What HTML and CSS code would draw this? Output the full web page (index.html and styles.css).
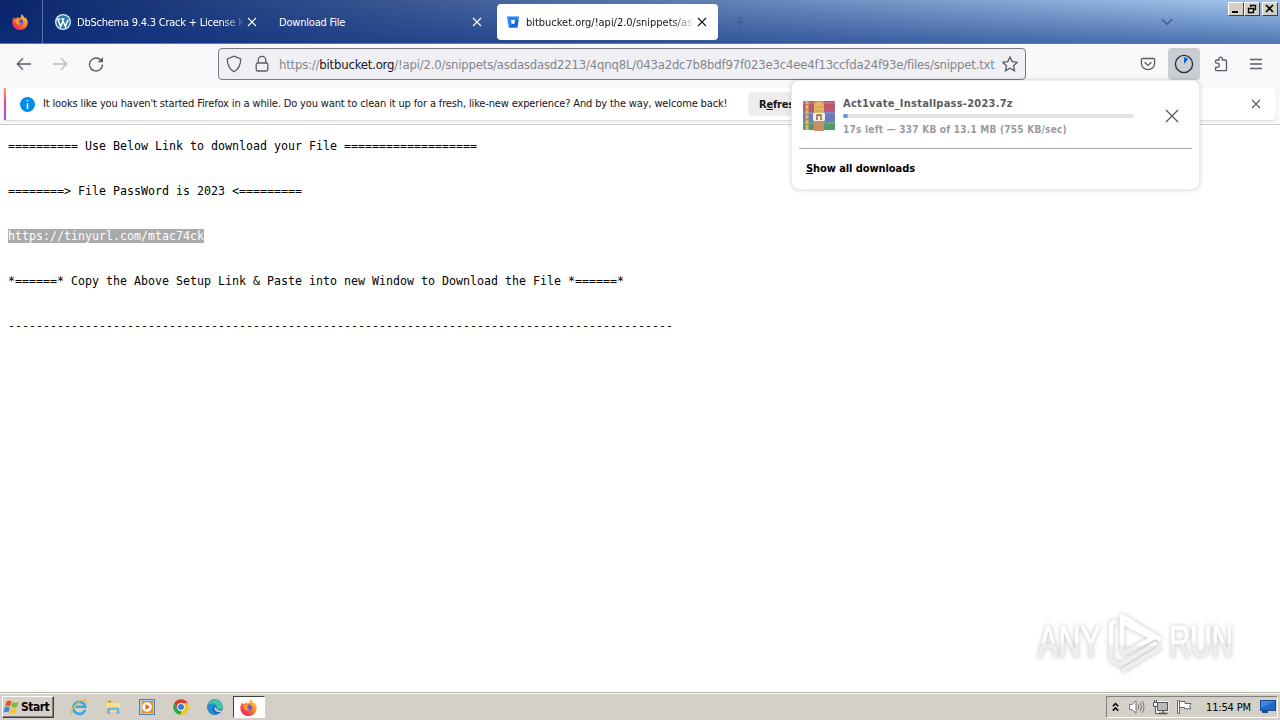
FILE: index.html
```html
<!DOCTYPE html>
<html lang="en">
  <head>
    <meta charset="utf-8">
    <title>bitbucket.org/!api/2.0/snippets</title>
    <link rel="stylesheet" href="styles.css">
  </head>
  <body>
    <div class="tabbar">
      <div class="firefox-view">
        <svg width="16" height="16" viewBox="0 0 16 16">
          <defs>
            <linearGradient id="fox" x1="1" y1="0" x2="0.2" y2="1">
              <stop offset="0" stop-color="#ffe14a" />
              <stop offset="0.45" stop-color="#ff9029" />
              <stop offset="0.8" stop-color="#f83c45" />
              <stop offset="1" stop-color="#e5207a" />
            </linearGradient>
            <symbol id="firefox" viewBox="0 0 16 16">
              <path d="M2.3 3.2 3.2 4.7 5 4.2 5.6 2.7 7 4.2 9 3.2 9.4.3C11 1.2 12 2.6 12.4 4L13.6 3.5C15 5 15.8 7 15.7 8.8A7.7 7.3 0 0 1 .3 8.8C.2 6.5 1 4.5 2.3 3.2z" fill="url(#fox)" />
              <circle cx="8.2" cy="8.2" r="3.1" fill="#7950c9" />
              <path d="M3.5 5.5C5.5 4.8 7.5 5 8.5 6.2L6.7 7.3C6.5 8.8 7.8 9.7 9.4 9.3 8 11.8 4 11 3.5 8z" fill="#ff9b28" />
            </symbol>
          </defs>
          <use href="#firefox" />
        </svg>
      </div>
      <div class="tab tab-first">
        <svg class="favicon" width="16" height="16" viewBox="0 0 16 16">
          <circle cx="8" cy="8" r="8" fill="#d8edf6" />
          <circle cx="8" cy="8" r="6.7" fill="#297a9e" />
          <path d="M2.8 5.3 5.7 12.7 8 6.5 10.4 12.7 13 5.8M2.3 4.9H5.2M6.2 4.9H9.4M7.4 4.9 8 6.5" fill="none" stroke="#fff" stroke-width="1.5" />
        </svg>
        <span class="tab-label">DbSchema 9.4.3 Crack + License K</span>
        <svg class="close" width="10" height="10" viewBox="0 0 10 10"><path d="M1 1 9 9M9 1 1 9" /></svg>
      </div>
      <div class="tab tab-second">
        <span class="tab-label">Download File</span>
        <svg class="close" width="10" height="10" viewBox="0 0 10 10"><path d="M1 1 9 9M9 1 1 9" /></svg>
      </div>
      <div class="tab tab-active">
        <svg class="favicon" width="12" height="12" viewBox="0 0 12 12">
          <path d="M0 .5H12L10.4 11.5H1.8z" fill="#2684ff" />
          <path d="M8 4H11.5L10.4 11.5H1.8L5 8H7.5z" fill="#1764df" />
          <path d="M4 4H8L7.4 7.8H4.7z" fill="#fff" />
        </svg>
        <span class="tab-label">bitbucket.org/!api/2.0/snippets/asd</span>
        <svg class="close" width="10" height="10" viewBox="0 0 10 10"><path d="M1 1 9 9M9 1 1 9" /></svg>
      </div>
      <svg class="new-tab" width="12" height="12" viewBox="0 0 12 12"><path d="M6 1V11M1 6H11" /></svg>
      <svg class="all-tabs" width="12" height="8" viewBox="0 0 12 8"><path d="M.8 1 6 6.2 11.2 1" /></svg>
      <div class="window-buttons">
        <span class="wbtn"><svg width="14" height="12" viewBox="0 0 14 12"><path d="M3 9H9" stroke="#000" stroke-width="2" /></svg></span>
        <span class="wbtn"><svg width="14" height="12" viewBox="0 0 14 12"><path d="M5.5 4V2.5H10.5V6.5H8.5M5 2.5H11M3 5.5H9M3.5 5V9.5H8.5V5" fill="none" stroke="#000" stroke-width="1.3" /></svg></span>
        <span class="wbtn wbtn-close"><svg width="14" height="12" viewBox="0 0 14 12"><path d="M3 2 10 9M10 2 3 9" stroke="#000" stroke-width="1.6" /></svg></span>
      </div>
    </div>

    <div class="toolbar">
      <svg class="nav back" width="16" height="16" viewBox="0 0 16 16"><path d="M15 8H1.5M7 2.3 1.3 8 7 13.7" /></svg>
      <svg class="nav forward" width="16" height="16" viewBox="0 0 16 16"><path d="M1 8H14.5M9 2.3 14.7 8 9 13.7" /></svg>
      <svg class="nav reload" width="16" height="16" viewBox="0 0 16 16"><path d="M13.6 5.2A6.5 6.5 0 1 0 14.5 8.5" /><path d="M15 1V6.3H9.7z" class="solid" /></svg>
      <div class="urlbar">
        <svg width="16" height="18" viewBox="0 0 16 18"><path d="M8 1.2 14.7 4C14.7 9.5 13.2 14 8 16.8 2.8 14 1.3 9.5 1.3 4z" /></svg>
        <svg class="lock" width="14" height="18" viewBox="0 0 14 18"><path d="M3.2 8V5.2A3.8 3.8 0 0 1 10.8 5.2V8" /><rect x="1.2" y="8" width="11.6" height="8" rx="1.5" /></svg>
        <span class="url">https://<b>bitbucket.org</b>/!api/2.0/snippets/asdasdasd2213/4qnq8L/043a2dc7b8bdf97f023e3c4ee4f13ccfda24f93e/files/snippet.txt</span>
        <svg class="star" width="16" height="16" viewBox="0 0 16 16"><path d="M8 1 10.2 5.6 15.3 6.2 11.5 9.7 12.5 14.8 8 12.3 3.5 14.8 4.5 9.7.7 6.2 5.8 5.6z" /></svg>
      </div>
      <div class="tools">
        <svg width="16" height="16" viewBox="0 0 16 16"><path d="M2.6 2.5H13.4Q14.6 2.5 14.6 3.7V7.5A6.6 6.1 0 0 1 1.4 7.5V3.7Q1.4 2.5 2.6 2.5z" /><path d="M4.6 6.3 8 9.4 11.4 6.3" /></svg>
        <span class="downloads-button">
          <svg width="20" height="20" viewBox="0 0 20 20"><circle cx="10" cy="10" r="8.6" /><path d="M10 10V3.2A6.8 6.8 0 0 1 14.2 4.7z" class="pie" /></svg>
        </span>
        <svg class="ext" width="16" height="16" viewBox="0 0 16 16"><path d="M2.6 7V4.9Q2.6 4 3.5 4H6V2.8A1.7 1.7 0 0 1 9.4 2.8V4H12.6Q13.5 4 13.5 4.9V13.7Q13.5 14.6 12.6 14.6H3.5Q2.6 14.6 2.6 13.7V11.3H4.2A2 2 0 0 0 4.2 7.2H2.6" /></svg>
        <svg width="14" height="14" viewBox="0 0 14 14"><path d="M1 2.5H13M1 7H13M1 11.5H13" /></svg>
      </div>
    </div>

    <div class="notice-wrap">
      <div class="notice">
        <svg class="info" width="15" height="15" viewBox="0 0 15 15"><circle cx="7.5" cy="7.5" r="7.5" fill="#008deb" /><path d="M7.5 3V4.6M7.5 6.2V12" stroke="#fff" stroke-width="1.5" /></svg>
        <span class="notice-text">It looks like you haven't started Firefox in a while. Do you want to clean it up for a fresh, like-new experience? And by the way, welcome back!</span>
        <button class="refresh">R<u>e</u>fresh</button>
        <svg class="close" width="10" height="10" viewBox="0 0 10 10"><path d="M1 1 9 9M9 1 1 9" /></svg>
      </div>
    </div>

    <div class="content">
<pre>========== Use Below Link to download your File ===================


========&gt; File PassWord is 2023 &lt;=========


<span class="selected">https://tinyurl.com/mtac74ck</span>


*======* Copy the Above Setup Link &amp; Paste into new Window to Download the File *======*


-----------------------------------------------------------------------------------------------</pre>
    </div>

    <div class="taskbar">
      <div class="start">
        <svg width="17" height="16" viewBox="0 0 17 16">
          <path d="M3.5 2.5Q6 .8 8.7 2.4L7.2 7.3Q4.6 6 2 7.5z" fill="#e8562a" />
          <path d="M9.6 3Q12 4.5 15.5 3L14 8Q11.3 9.3 8.2 7.8z" fill="#7db93b" />
          <path d="M1.7 8.5Q4.3 7 6.9 8.4L5.5 13.2Q2.8 12 .3 13.5z" fill="#3e88d8" />
          <path d="M7.9 8.9Q10.5 10.4 13.7 9L12.2 14Q9.5 15.2 6.5 13.8z" fill="#fbc22f" />
        </svg>
        Start
      </div>
      <div class="launch">
        <svg width="18" height="18" viewBox="0 0 18 18">
          <path d="M15 11.8A6 6 0 1 1 15.2 8.8H5.5" fill="none" stroke="#3ba7e0" stroke-width="2.6" />
          <path d="M2.5 15.8C-.5 17 1.5 10 7 5.4 11.5 1.5 17.5.2 15.8 4.2" fill="none" stroke="#e9b93a" stroke-width="1.3" />
        </svg>
        <svg width="18" height="18" viewBox="0 0 18 18">
          <path d="M2 3H7L8 4.5H15V9H2z" fill="#e9c55d" />
          <path d="M2.5 5H16V14H2.5z" fill="#f6df92" />
          <path d="M3 16V11Q3 9.5 4.5 9.5H14Q15.5 9.5 15.5 11V16H12.5V12H6V16z" fill="#70b8dc" />
          <path d="M4.5 3.5H7" stroke="#54a545" stroke-width="1.5" />
        </svg>
        <svg width="18" height="18" viewBox="0 0 18 18">
          <rect x="1.5" y="1.5" width="15" height="15" fill="#a9cdec" stroke="#4682b9" />
          <rect x="4" y="3" width="11" height="12" fill="#f28a1c" />
          <circle cx="9" cy="9" r="4.8" fill="#fff" />
          <path d="M7.5 6 12 9 7.5 12z" fill="#e56a0b" />
        </svg>
        <svg width="18" height="18" viewBox="0 0 18 18">
          <circle cx="9" cy="9" r="7.8" fill="#f9c21a" />
          <path d="M2.2 5.2A7.8 7.8 0 0 1 15.8 5.2H9L5.7 11z" fill="#dd3c2c" />
          <path d="M2.2 5.2 5.7 11 9.5 12.5 8.5 16.8A7.8 7.8 0 0 1 2.2 5.2z" fill="#2da34e" />
          <circle cx="9" cy="9" r="3.9" fill="#fff" />
          <circle cx="9" cy="9" r="3" fill="#3b78e7" />
        </svg>
        <svg width="18" height="18" viewBox="0 0 18 18">
          <circle cx="9" cy="9" r="7.8" fill="#1672c4" />
          <path d="M1.4 8A7.8 7.8 0 0 1 16.8 8.8C16.5 12.2 11 12.3 10.7 10.2 12 8 9 5.3 5.8 5.8 3.8 6 2.2 6.7 1.4 8z" fill="#43c7a2" />
          <path d="M1.4 8C3 5 8.5 4.5 10.7 8.5 8 6.7 6 9 6.5 12 7 14.3 9 16 11 16.3 5 18.5.8 13.5 1.4 8z" fill="#1e8ed0" />
          <path d="M10.5 8.8C9 11 12 13 16 12.4L15.2 13.8C11 15 8 12 8.5 10z" fill="#d4d0c8" />
        </svg>
      </div>
      <div class="task-active"><svg width="17" height="17"><use href="#firefox" /></svg></div>
      <div class="tray">
        <svg class="chev" width="7" height="10" viewBox="0 0 7 10"><path d="M.8 4.2 3.5 1.5 6.2 4.2M.8 8.6 3.5 5.9 6.2 8.6" fill="none" stroke="#000" stroke-width="1.5" /></svg>
        <svg class="speaker" width="18" height="16" viewBox="0 0 18 16"><path d="M1.5 5.5H4L8 1.8V14.2L4 10.5H1.5z" fill="#fff" stroke="#777" /><path d="M10 5.5Q11.5 8 10 10.5M12 3.8Q15 8 12 12.2M14 2Q18 8 14 14" fill="none" stroke="#777" /></svg>
        <svg class="net" width="17" height="16" viewBox="0 0 17 16"><rect x="5" y="3" width="10.5" height="8.5" fill="#ccc" stroke="#fff" stroke-width="2" /><rect x="5.5" y="3.5" width="10" height="8" fill="#bbb" stroke="#555" /><path d="M7 14.5H15.5M11 12V14" stroke="#555" stroke-width="1.5" /><path d="M1.5 3.5H5.5V7.5H1.5zM2.5 1V3M4.5 1V3M3.5 8V14.5H7" fill="#fff" stroke="#555" /></svg>
        <svg class="flag" width="17" height="16" viewBox="0 0 17 16"><path d="M1.5 1.5H3.5V14.5H1.5z" fill="#fff" stroke="#666" /><path d="M3.5 2.5H9V4.5H15L13.5 7.2 15 9.8H8.5V8.5H3.5z" fill="#fff" stroke="#666" /></svg>
        <span class="clock">11:54 PM</span>
        <svg class="desktop" width="16" height="13" viewBox="0 0 16 13"><rect x=".5" y=".5" width="15" height="10" fill="#1f69c9" stroke="#174a91" /><path d="M1 1H15L1 8z" fill="#3e86d8" /><path d="M2 12H8" stroke="#254f87" stroke-width="2" /></svg>
      </div>
    </div>

    <div class="download-panel">
      <div class="download-item">
        <svg class="archive" width="32" height="32" viewBox="0 0 32 32">
          <rect x="0" y="1" width="32" height="10" rx="1" fill="#b8586c" />
          <rect x="0" y="11" width="32" height="10" fill="#6b7bbd" />
          <rect x="0" y="21" width="32" height="9" rx="1" fill="#55996f" />
          <path d="M0 3H32M0 13H32M0 23H32" stroke="#fff" stroke-opacity=".25" />
          <path d="M4 1V30" stroke="#e2b45c" stroke-width="3" />
          <path d="M4 4V28" stroke="#a08a4c" stroke-width="3" stroke-dasharray="1 4" />
          <rect x="11" y="1" width="10" height="30" fill="#c88e68" />
          <path d="M11 13V7Q11 2 16 2T21 7V13z" fill="#e8b963" />
          <path d="M12 7H20M12 11H20" stroke="#c49350" />
          <rect x="10" y="13" width="12" height="8" rx="1" fill="#f4ece4" />
          <path d="M14 20V15H18V20" fill="none" stroke="#85604b" stroke-width="1.4" />
        </svg>
        <div class="download-info">
          <div class="download-name">Act1vate_Installpass-2023.7z</div>
          <div class="progress"><div class="progress-bar"></div></div>
          <div class="download-status">17s left — 337 KB of 13.1 MB (755 KB/sec)</div>
        </div>
        <svg class="cancel" width="14" height="14" viewBox="0 0 14 14"><path d="M1 1 13 13M13 1 1 13" /></svg>
      </div>
      <div class="show-all"><u>S</u>how all downloads</div>
    </div>

    <svg class="watermark" width="210" height="70" viewBox="0 0 210 70">
      <defs>
        <linearGradient id="wm" x1="0" y1="0" x2="0" y2="1">
          <stop offset="0.5" stop-color="#fff" />
          <stop offset="0.56" stop-color="#eee" />
        </linearGradient>
      </defs>
      <g class="wm-shape">
        <text x="8" y="52" textLength="63" lengthAdjust="spacingAndGlyphs">ANY</text>
        <text x="139" y="52" textLength="64" lengthAdjust="spacingAndGlyphs">RUN</text>
        <path d="M81 55V19L86 16M92 49V11L131 35M81 55 90 60 127 38M92 49 123 33 92 17M92 66 131 42" />
      </g>
    </svg>
  </body>
</html>
```

FILE: styles.css
```css
* {
  box-sizing: border-box;
}
body {
  margin: 0;
  width: 1280px;
  height: 720px;
  overflow: hidden;
  display: flex;
  flex-direction: column;
  background: #fff;
  font-family: "DejaVu Sans Condensed", "DejaVu Sans", sans-serif;
  font-stretch: condensed;
  font-size: 11px;
  color: #15141a;
}
svg {
  flex: none;
  display: block;
}

/* tabs */
.tabbar {
  height: 44px;
  flex: none;
  display: flex;
  align-items: center;
  background: linear-gradient(rgba(10, 50, 130, 0) 0, rgba(10, 50, 130, 0.55) 100%),
    linear-gradient(90deg, #0a246a, #a6caf0);
  border-bottom: 1px solid #6b7792;
}
.firefox-view {
  width: 43px;
  height: 43px;
  padding: 14px 0 0 12px;
  border-right: 1px solid #5d72a3;
}
.tab {
  height: 36px;
  display: flex;
  align-items: center;
  color: #fff;
}
.tab-first {
  width: 225px;
  padding-left: 12px;
}
.tab-second {
  width: 225px;
  padding-left: 11px;
}
.tab-active {
  width: 221px;
  margin-left: 4px;
  padding-left: 10px;
  background: #fff;
  color: #15141a;
  border-radius: 4px;
}
.favicon {
  margin-right: 6px;
}
.tab-active .favicon {
  margin-right: 7px;
}
.tab-label {
  overflow: hidden;
  white-space: nowrap;
  width: 166px;
  line-height: 18px;
  padding-top: 2px;
}
.tab-first .tab-label {
  letter-spacing: -0.23px;
  -webkit-mask-image: linear-gradient(90deg, #000 145px, transparent 170px);
}
.tab-second .tab-label {
  width: 189px;
  letter-spacing: -0.2px;
}
.tab-active .tab-label {
  letter-spacing: -0.02px;
  -webkit-mask-image: linear-gradient(90deg, #000 145px, transparent 170px);
}
.tab .close {
  margin-left: 4px;
}
.tab-active .close {
  margin-left: 5px;
}
.close path {
  stroke: currentColor;
  stroke-width: 1.1;
}
.new-tab {
  margin-left: 16px;
}
.new-tab path,
.all-tabs path {
  fill: none;
  stroke: #405f91;
  stroke-width: 1.4;
}
.all-tabs {
  margin-left: auto;
}
.window-buttons {
  display: flex;
  align-self: flex-start;
  margin: 2px 2px 0 55px;
}
.wbtn {
  width: 16px;
  height: 14px;
  background: #d4d0c8;
  border: 1px solid;
  border-color: #fff #404040 #404040 #fff;
}
.wbtn-close {
  margin-left: 2px;
}

/* navigation */
.toolbar {
  height: 40px;
  flex: none;
  display: flex;
  align-items: center;
  background: #f9f9fb;
}
.toolbar path,
.toolbar rect,
.toolbar circle {
  fill: none;
  stroke: #5b5b66;
  stroke-width: 1.3;
}
.nav {
  margin-left: 20px;
}
.back {
  margin-left: 16px;
}
.forward {
  opacity: 0.4;
}
.toolbar .solid {
  fill: #5b5b66;
  stroke: none;
}
.urlbar {
  width: 808px;
  height: 32px;
  margin-left: 114px;
  padding-left: 7px;
  display: flex;
  align-items: center;
  background: #f0f0f4;
  border: 1px solid #77777f;
  border-radius: 4px;
}
.lock {
  margin-left: 13px;
}
.url {
  width: 718px;
  margin-left: 10px;
  color: #85858b;
  font-size: 13px;
  letter-spacing: -0.2px;
  white-space: nowrap;
}
.url b {
  font-weight: normal;
  color: #15141a;
}
.star {
  margin-left: 5px;
}
.tools {
  display: flex;
  align-items: center;
  margin-left: 114px;
}
.downloads-button {
  width: 32px;
  height: 32px;
  margin: 0 13px 0 12px;
  padding: 6px;
  background: #cbcdd5;
  border-radius: 4px;
}
.downloads-button circle {
  stroke: #2b2a33;
}
.toolbar .pie {
  fill: #0560d6;
  stroke: none;
}
.ext {
  margin-right: 20px;
}

/* notification bar */
.notice-wrap {
  height: 41px;
  flex: none;
  padding: 4px 4px 0;
  background: #f9f9fb;
  border-bottom: 1px solid #ccc;
}
.notice {
  height: 32px;
  display: flex;
  align-items: center;
  padding-left: 14px;
  background: #fff linear-gradient(#ff9a5b, #f0419b 45%, #9059ff) 0 0 / 2px 100% no-repeat;
  border-radius: 0 4px 4px 0;
  box-shadow: 0 1px 2px rgba(58, 57, 68, 0.2);
}
.info {
  margin: 0 8px 0 2px;
}
.notice-text {
  width: 705px;
  padding-bottom: 1px;
  letter-spacing: -0.143px;
  white-space: nowrap;
}
.refresh {
  width: 120px;
  height: 24px;
  border: 0;
  border-radius: 4px;
  background: #ececef;
  color: #15141a;
  font: bold 11px "DejaVu Sans Condensed", sans-serif;
  letter-spacing: -0.2px;
  text-align: left;
  padding: 0 11px;
  white-space: nowrap;
}
.notice .close {
  margin-left: auto;
  margin-right: 15px;
  color: #5b5b66;
}

/* page */
.content {
  flex: 1;
  padding: 14px 8px;
}
pre {
  margin: 0;
  font-family: "DejaVu Sans Mono", monospace;
  font-size: 11.627px;
  letter-spacing: 0.01px;
  line-height: 15px;
  color: #000;
}
.selected {
  background: #aaa;
  color: #fff;
}

/* taskbar */
.taskbar {
  height: 28px;
  flex: none;
  display: flex;
  align-items: center;
  background: #d4d0c8;
  border-top: 1px solid #b8b5ad;
  box-shadow: inset 0 1px #fff;
}
.start {
  width: 52px;
  height: 22px;
  margin-left: 2px;
  display: flex;
  align-items: center;
  gap: 1px;
  border: 1px solid;
  border-color: #fff #404040 #404040 #fff;
  box-shadow: inset -1px -1px #808080;
  font-weight: bold;
  font-size: 12px;
  letter-spacing: -0.5px;
  color: #000;
}
.launch {
  display: flex;
  gap: 16px;
  margin-left: 16px;
}
.task-active {
  width: 32px;
  height: 22px;
  margin-left: 9px;
  padding: 2px 6px;
  background: #fff;
  border: 1px solid;
  border-color: #404040 #fff #fff #404040;
}
.tray {
  width: 172px;
  height: 22px;
  margin-left: auto;
  margin-right: 2px;
  padding-left: 5px;
  display: flex;
  align-items: center;
  border: 1px solid;
  border-color: #808080 #fff #fff #808080;
  color: #000;
}
.speaker {
  margin-left: 9px;
}
.net {
  margin-left: 6px;
}
.flag {
  margin-left: 7px;
}
.clock {
  width: 48px;
  margin-left: 13px;
  padding-top: 1px;
  letter-spacing: -0.15px;
  white-space: nowrap;
}
.desktop {
  margin-left: 6px;
}

/* downloads popup */
.download-panel {
  position: absolute;
  left: 791px;
  top: 80px;
  width: 409px;
  height: 110px;
  padding: 0 7px;
  background: #fff;
  border: 1px solid #ececef;
  border-radius: 8px;
  box-shadow: 0 0 4px rgba(58, 57, 68, 0.22);
}
.download-item {
  height: 68px;
  display: flex;
  padding: 15px 0 0 4px;
  border-bottom: 1px solid #aaa;
}
.archive {
  margin-top: 4px;
}
.download-info {
  width: 291px;
  margin-left: 8px;
  font-weight: bold;
}
.download-name {
  line-height: 14px;
  padding-top: 1px;
  letter-spacing: 0.24px;
  color: #5b5b60;
}
.progress {
  height: 4px;
  margin-top: 3px;
  background: #e4e4e6;
  border-radius: 2px;
}
.progress-bar {
  width: 5px;
  height: 4px;
  background: #5b9bdc;
  border-radius: 2px;
}
.download-status {
  margin-top: 5px;
  line-height: 13px;
  font-size: 10px;
  letter-spacing: 0.24px;
  color: #9a9a9e;
}
.cancel {
  margin: 13px 0 0 31px;
}
.cancel path {
  stroke: #5b5b66;
  stroke-width: 1.4;
}
.show-all {
  padding: 13px 7px;
  line-height: 14px;
  font-weight: bold;
  letter-spacing: -0.08px;
  color: #000;
}

/* logo over the page */
.watermark {
  position: absolute;
  left: 1030px;
  top: 605px;
  filter: drop-shadow(0 0 2px rgba(0, 0, 0, 0.25));
}
.wm-shape text {
  font: 44px "Liberation Sans", sans-serif;
  fill: url(#wm);
  stroke: url(#wm);
}
.wm-shape path {
  fill: none;
  stroke: url(#wm);
  stroke-width: 4.5;
  stroke-linejoin: round;
}
```
